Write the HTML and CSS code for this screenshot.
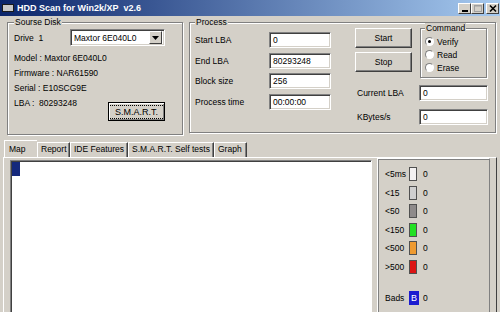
FILE: index.html
```html
<!DOCTYPE html>
<html>
<head>
    <meta charset="UTF-8">
    <title>HDD Scan for Win2k/XP v2.6</title>
    <link rel="stylesheet" href="styles.css">
</head>
<body>
    <div class="titlebar">
        <span class="app-icon"></span>
        <span class="title">HDD Scan for Win2k/XP&nbsp; v2.6</span>
        <div class="caption-buttons">
            <span class="cap-btn"><svg width="10" height="9" viewBox="0 0 10 9"><rect x="2" y="6" width="6" height="2" fill="#000"/></svg></span>
            <span class="cap-btn"><svg width="10" height="9" viewBox="0 0 10 9"><rect x="1.5" y="1.5" width="7" height="6" fill="none" stroke="#a0a0a0"/><rect x="1" y="1" width="8" height="1.5" fill="#a0a0a0"/></svg></span>
            <span class="cap-btn close"><svg width="10" height="9" viewBox="0 0 10 9"><path d="M2 1.5 L8 7.5 M8 1.5 L2 7.5" stroke="#000" stroke-width="1.6"/></svg></span>
        </div>
    </div>

    <div class="top">
        <fieldset class="group source">
            <legend>Sourse Disk</legend>
            <div class="drive-row">
                <span class="drive-label">Drive&nbsp; 1</span>
                <div class="combo">
                    <span class="combo-text">Maxtor 6E040L0</span>
                    <span class="combo-btn"><svg width="7" height="4" viewBox="0 0 7 4"><path d="M0 0 H7 L3.5 4 Z" fill="#000"/></svg></span>
                </div>
            </div>
            <div class="info">
                <div class="info-line">Model : Maxtor 6E040L0</div>
                <div class="info-line">Firmware : NAR61590</div>
                <div class="info-line">Serial : E10SCG9E</div>
                <div class="lba-row">
                    <span class="info-line">LBA :&nbsp; 80293248</span>
                    <button class="btn default"><span class="focus">S.M.A.R.T.</span></button>
                </div>
            </div>
        </fieldset>

        <fieldset class="group process">
            <legend>Process</legend>
            <div class="process-body">
                <div class="fields">
                    <div class="field-row"><span class="field-label">Start LBA</span><span class="edit">0</span></div>
                    <div class="field-row"><span class="field-label">End LBA</span><span class="edit">80293248</span></div>
                    <div class="field-row"><span class="field-label">Block size</span><span class="edit">256</span></div>
                    <div class="field-row"><span class="field-label">Process time</span><span class="edit">00:00:00</span></div>
                </div>
                <div class="controls">
                    <div class="controls-top">
                        <div class="buttons">
                            <button class="btn">Start</button>
                            <button class="btn">Stop</button>
                        </div>
                        <fieldset class="group command">
                            <legend>Command</legend>
                            <div class="radio-row"><span class="radio checked"></span>Verify</div>
                            <div class="radio-row"><span class="radio"></span>Read</div>
                            <div class="radio-row"><span class="radio"></span>Erase</div>
                        </fieldset>
                    </div>
                    <div class="stat-row first"><span class="stat-label">Current LBA</span><span class="edit wide">0</span></div>
                    <div class="stat-row"><span class="stat-label">KBytes/s</span><span class="edit wide">0</span></div>
                </div>
            </div>
        </fieldset>
    </div>

    <div class="tabs">
        <span class="tab active">Map</span>
        <span class="tab t-report">Report</span>
        <span class="tab t-ide">IDE Features</span>
        <span class="tab t-smart">S.M.A.R.T. Self tests</span>
        <span class="tab t-graph">Graph</span>
    </div>

    <div class="tab-panel">
        <div class="map">
            <div class="block"></div>
        </div>
        <div class="legend-panel">
            <div class="legend-row"><span class="legend-label">&lt;5ms</span><span class="swatch" style="background:#f4f2f2"></span><span>0</span></div>
            <div class="legend-row"><span class="legend-label">&lt;15</span><span class="swatch" style="background:#cfcfcf"></span><span>0</span></div>
            <div class="legend-row"><span class="legend-label">&lt;50</span><span class="swatch" style="background:#8e8a8a"></span><span>0</span></div>
            <div class="legend-row"><span class="legend-label">&lt;150</span><span class="swatch" style="background:#22e022"></span><span>0</span></div>
            <div class="legend-row"><span class="legend-label">&lt;500</span><span class="swatch" style="background:#ee9a30"></span><span>0</span></div>
            <div class="legend-row"><span class="legend-label">&gt;500</span><span class="swatch" style="background:#dc1414"></span><span>0</span></div>
            <div class="legend-row bads"><span class="legend-label">Bads</span><span class="swatch bad">B</span><span>0</span></div>
        </div>
    </div>
</body>
</html>
```

FILE: styles.css
```css
body {
    margin: 0;
    width: 500px;
    height: 312px;
    overflow: hidden;
    background: #d4d0c8;
    font-family: "Liberation Sans", Arial, sans-serif;
    font-size: 8.5px;
    color: #000;
}
.titlebar {
    height: 16px;
    display: flex;
    align-items: center;
    padding: 0 1px 0 2px;
    background: linear-gradient(to right, #0a246a, #a6caf0);
}
.app-icon {
    width: 10px;
    height: 6px;
    background: #c8c8c8;
    border: 1px solid #1a1a1a;
    margin-right: 3px;
}
.title {
    flex: 1;
    color: #fff;
    font-weight: bold;
    font-size: 9px;
}
.caption-buttons {
    display: flex;
}
.cap-btn {
    width: 13px;
    height: 11px;
    box-sizing: border-box;
    background: #d4d0c8;
    border: 1px solid;
    border-color: #fff #404040 #404040 #fff;
    display: flex;
    align-items: center;
    justify-content: center;
}
.cap-btn.close {
    margin-left: 2px;
}

/* group boxes */
.top {
    display: flex;
    gap: 6px;
    padding: 1px 0 0 7px;
}
.group {
    margin: 0;
    min-width: 0;
    box-sizing: border-box;
    border: 1px solid #808080;
    box-shadow: 1px 1px 0 #fff, inset 1px 1px 0 #fff;
}
.group legend {
    padding: 0 1px;
    line-height: 10px;
    background: #d4d0c8;
}
.source {
    width: 176px;
    height: 118px;
    padding: 2px 6px 0 6px;
}
.process {
    width: 307px;
    height: 116px;
    padding: 0 7px 0 5px;
}
.drive-row {
    display: flex;
    align-items: center;
    height: 17px;
}
.drive-label {
    width: 56px;
}
.combo {
    width: 95px;
    height: 17px;
    box-sizing: border-box;
    background: #fff;
    border: 1px solid;
    border-color: #808080 #fff #fff #808080;
    box-shadow: inset 1px 1px 0 #404040, inset -1px -1px 0 #d4d0c8;
    display: flex;
    align-items: center;
    padding: 0 2px 0 3px;
}
.combo-text {
    flex: 1;
}
.combo-btn {
    width: 13px;
    height: 13px;
    box-sizing: border-box;
    background: #d4d0c8;
    border: 1px solid;
    border-color: #fff #404040 #404040 #fff;
    display: flex;
    align-items: center;
    justify-content: center;
}
.info {
    margin-top: 5px;
}
.info-line {
    line-height: 15px;
}
.lba-row {
    display: flex;
    align-items: flex-start;
}
.btn {
    font: inherit;
    color: #000;
    background: #d4d0c8;
    border: 1px solid;
    border-color: #fff #404040 #404040 #fff;
    box-shadow: inset -1px -1px 0 #808080;
    padding: 0;
    width: 57px;
    height: 20px;
}
.btn.default {
    margin: 6px 11px 0 auto;
    height: 19px;
    border: 1px solid #000;
    box-shadow: inset 1px 1px 0 #fff, inset -1px -1px 0 #808080;
    display: flex;
    align-items: center;
    justify-content: center;
}
.focus {
    border: 1px dotted #000;
    padding: 1px 6px;
    font-size: 9px;
}

/* process */
.process-body {
    display: flex;
    gap: 24px;
}
.fields {
    margin-top: 5px;
    display: flex;
    flex-direction: column;
    gap: 4.5px;
}
.field-row {
    display: flex;
    align-items: center;
}
.field-label {
    width: 74px;
}
.edit {
    width: 62px;
    height: 16px;
    box-sizing: border-box;
    background: #fff;
    border: 1px solid;
    border-color: #808080 #fff #fff #808080;
    box-shadow: inset 1px 1px 0 #404040, inset -1px -1px 0 #d4d0c8;
    padding: 0 3px;
    line-height: 14px;
}
.edit.wide {
    width: 69px;
}
.controls {
    width: 133px;
}
.controls-top {
    display: flex;
    gap: 8px;
}
.buttons {
    margin-top: 1px;
    display: flex;
    flex-direction: column;
    gap: 4px;
}
.command {
    width: 67px;
    height: 55px;
    margin-top: -4px;
    padding: 2px 4px 0 4px;
}
.radio-row {
    display: flex;
    align-items: center;
    gap: 3px;
    height: 13px;
}
.radio {
    width: 9px;
    height: 9px;
    box-sizing: border-box;
    border-radius: 50%;
    background: #fff;
    border: 1px solid;
    border-color: #808080 #fff #fff #808080;
    display: flex;
    align-items: center;
    justify-content: center;
}
.radio.checked::after {
    content: "";
    width: 3px;
    height: 3px;
    border-radius: 50%;
    background: #000;
}
.stat-row {
    display: flex;
    align-items: center;
    margin-top: 8px;
}
.stat-row.first {
    margin-top: 7px;
}
.stat-label {
    width: 62px;
    padding-left: 2px;
}

/* tabs */
.tabs {
    display: flex;
    align-items: flex-end;
    height: 17px;
    margin-top: 5px;
    padding-left: 4px;
}
.tab {
    box-sizing: border-box;
    height: 15px;
    line-height: 13px;
    padding: 0 3px;
    white-space: nowrap;
    overflow: hidden;
    border-top: 1px solid #fff;
    border-left: 1px solid #fff;
    border-right: 1px solid #404040;
    box-shadow: inset -1px 0 0 #808080;
}
.tab.active {
    width: 33px;
    height: 17px;
    line-height: 16px;
    padding-left: 4px;
    border-right: none;
    box-shadow: none;
}
.t-report { width: 33px; }
.t-ide { width: 58px; }
.t-smart { width: 86px; }
.t-graph { width: 33px; }

.tab-panel {
    display: flex;
    gap: 5px;
    margin: 0 3px 0 3px;
    height: 160px;
    border-top: 1px solid #fff;
    border-left: 1px solid #fff;
    border-right: 1px solid #404040;
    padding: 2px 6px 0 6px;
}
.map {
    width: 362px;
    box-sizing: border-box;
    background: #fff;
    border: 1px solid;
    border-color: #808080 #fff #fff #808080;
    box-shadow: inset 1px 1px 0 #404040;
    padding: 1px 0 0 1px;
}
.block {
    width: 8px;
    height: 14px;
    background: #15297c;
}
.legend-panel {
    width: 113px;
    margin-top: -2px;
    box-sizing: border-box;
    border: 1px solid;
    border-color: #fff #808080 #808080 #fff;
    box-shadow: inset 1px 1px 0 #808080;
    padding: 8px 0 0 7px;
    display: flex;
    flex-direction: column;
    gap: 4.6px;
}
.legend-row {
    display: flex;
    align-items: center;
    height: 14px;
}
.legend-label {
    width: 24px;
}
.swatch {
    width: 8px;
    height: 14px;
    box-sizing: border-box;
    border: 1px solid #505050;
    margin-right: 6px;
}
.bads {
    margin-top: 12px;
}
.swatch.bad {
    width: 10px;
    margin-right: 4px;
    background: #1c1cd0;
    border-color: #1c1cd0;
    color: #fff;
    font-size: 9px;
    line-height: 12px;
    text-align: center;
}
```
